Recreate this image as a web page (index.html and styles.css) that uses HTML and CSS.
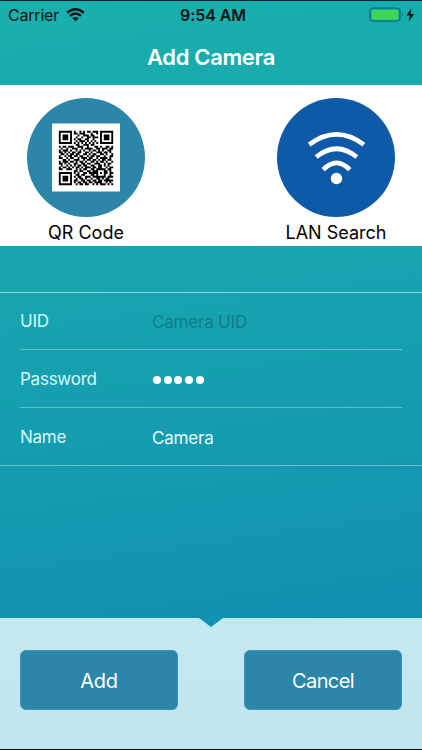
FILE: index.html
```html
<!DOCTYPE html>
<html lang="en">
<head>
    <meta charset="UTF-8">
    <meta name="viewport" content="width=device-width, initial-scale=1.0">
    <title>Add Camera</title>
    <link rel="stylesheet" href="styles.css">
</head>
<body>
    <!-- Status Bar -->
    <div class="status-bar">
        <div class="carrier">
            <span>Carrier</span>
            <svg width="19" height="14" viewBox="0 0 19 14">
                <path d="M1.2 4.8 Q9.5 -2.2 17.8 4.8" fill="none" stroke="#061416" stroke-width="2.5"/>
                <path d="M4.1 7.9 Q9.5 3.3 14.9 7.9" fill="none" stroke="#061416" stroke-width="2.4"/>
                <path d="M6.3 10.2 Q9.5 7.6 12.7 10.2 L9.5 13.2 Z" fill="#061416"/>
            </svg>
        </div>
        <div class="clock">9:54 AM</div>
        <div class="battery">
            <svg width="48" height="16" viewBox="0 0 48 16">
                <rect x="1" y="1.2" width="30" height="13" rx="3" fill="none" stroke="#0b7078" stroke-width="1.2"/>
                <rect x="2.9" y="2.9" width="26.2" height="9.6" rx="1.2" fill="#43d551"/>
                <path d="M33 5.6 Q35 7.7 33 9.8 Z" fill="#0b7078"/>
                <path d="M42.4 1.3 L37.5 8.5 L40.8 8.5 L39.6 14.6 L45.2 6.9 L41.7 6.9 Z" fill="#061416"/>
            </svg>
        </div>
    </div>

    <h1 class="title">Add Camera</h1>

    <!-- Search Options -->
    <div class="options">
        <div class="option">
            <div class="circle qr">
                <svg id="qr-code" width="68" height="69" viewBox="-3.65 -3.9 36.3 36.3">
                    <rect x="-3.65" y="-3.9" width="36.3" height="36.3" fill="white"/>
                </svg>
            </div>
            <span class="option-label">QR Code</span>
        </div>
        <div class="option">
            <div class="circle lan">
                <svg width="118" height="118" viewBox="0 0 118 118">
                    <g fill="none" stroke="white" stroke-width="4.7">
                        <path d="M32.2 45.6 Q59.5 25.2 86.8 45.6"/>
                        <path d="M39.2 58 Q59.5 41.4 79.8 58"/>
                        <path d="M46.2 70.6 Q59.5 57 72.8 70.6"/>
                    </g>
                    <circle cx="59.5" cy="79.5" r="5.7" fill="white"/>
                </svg>
            </div>
            <span class="option-label">LAN Search</span>
        </div>
    </div>

    <!-- Camera Details -->
    <div class="form">
        <div class="row">
            <label class="row-label" for="uid">UID</label>
            <input class="row-input" id="uid" type="text" placeholder="Camera UID">
        </div>
        <div class="row">
            <label class="row-label" for="password">Password</label>
            <div class="dots" id="password"><i></i><i></i><i></i><i></i><i></i></div>
        </div>
        <div class="row">
            <label class="row-label" for="name">Name</label>
            <input class="row-input" id="name" type="text" value="Camera">
        </div>
    </div>

    <!-- Bottom Buttons -->
    <div class="footer">
        <button class="button">Add</button>
        <button class="button">Cancel</button>
    </div>

    <script>
        // One string per row of the code, 1 is a dark module
        const qrRows = [
            '11111110100101011011101111111',
            '10000010110111000100101000001',
            '10111010001001110110001011101',
            '10111010010010011011101011101',
            '10111010101100110010001011101',
            '10000010010111010101001000001',
            '11111110101010101010101111111',
            '00000000011001110110000000000',
            '10110111001110010001101001101',
            '01001001110010111100110111011',
            '10111010010101001011010100110',
            '11010101101100110100111011010',
            '01101011011001101011001101001',
            '10010110110110010110110010011',
            '11001011001011101100101111010',
            '00110100111001011011010110110',
            '10111011010110100110101101001',
            '11010100110011011001110010110',
            '01001010101101100110011010100',
            '10110101011010111011011001011',
            '11001110010101100110111110110',
            '00000000110110011011100011010',
            '11111110101001101111101011011',
            '10000010011011000110100010010',
            '10111010101100111011111110111',
            '10111010010110100100110101100',
            '10111010110011011011011011111',
            '10000010101101101101111001010',
            '11111110010110110010101110101'
        ];

        let path = '';
        qrRows.forEach((row, y) => {
            row.split('').forEach((cell, x) => {
                if (cell === '1') {
                    path += `M${x} ${y}h1v1h-1z`;
                }
            });
        });
        const modules = document.createElementNS('http://www.w3.org/2000/svg', 'path');
        modules.setAttribute('d', path);
        document.getElementById('qr-code').appendChild(modules);
    </script>
</body>
</html>
```
FILE: styles.css
```css
/* Page */
* {
    box-sizing: border-box;
}
body {
    margin: 0;
    width: 422px;
    height: 750px;
    overflow: hidden;
    display: flex;
    flex-direction: column;
    font-family: Inter, "Liberation Sans", sans-serif;
    color: white;
    background: linear-gradient(172deg, #1aafad 0%, #18a6ae 32%, #169fb0 50%, #1290b0 82%, #118cb0 100%);
    border-top: 1px solid #0a2b30;
    border-bottom: 1px solid #06141a;
}
/* Status Bar */
.status-bar {
    height: 28px;
    padding: 0 5px 0 8px;
    display: grid;
    grid-template-columns: 1fr auto 1fr;
    align-items: center;
    color: #061416;
    font-size: 16px;
}
.carrier {
    display: flex;
    align-items: center;
    gap: 7px;
    letter-spacing: -0.2px;
}
.carrier svg {
    margin-top: -1px;
}
.clock {
    padding-left: 1px;
    font-weight: 600;
    letter-spacing: -0.1px;
}
.battery {
    display: flex;
    justify-content: flex-end;
}
.title {
    margin: 0;
    height: 56px;
    line-height: 56px;
    text-align: center;
    font-size: 22px;
    font-weight: 600;
    letter-spacing: -0.35px;
}
/* Search Options */
.options {
    height: 161px;
    padding: 13px 27px 0;
    display: flex;
    justify-content: space-between;
    background-color: white;
}
.option {
    display: flex;
    flex-direction: column;
    align-items: center;
}
.circle {
    width: 118px;
    height: 119px;
    border-radius: 50%;
    display: flex;
    justify-content: center;
    align-items: center;
}
.qr {
    padding-right: 1px;
    background-color: #2c86a9;
}
.lan {
    background-color: #0e5aa8;
}
.option-label {
    margin-top: 4px;
    line-height: 24px;
    font-size: 18px;
    color: black;
}
/* Form */
.form {
    margin-top: 46px;
    height: 174px;
    border-top: 1px solid #8ad5d9;
    border-bottom: 1px solid #67bfd0;
}
.row {
    height: 58px;
    margin: 0 20px;
    display: flex;
    border-bottom: 1px solid #5fbfca;
}
.row:first-child {
    height: 57px;
}
.row:last-child {
    height: 57px;
    border-bottom: none;
}
.row-label {
    width: 132px;
    line-height: 59px;
    font-size: 17px;
    letter-spacing: -0.25px;
    color: #dcf8fa;
}
.row:first-child .row-label {
    line-height: 57px;
}
.row-input {
    width: 230px;
    height: 60px;
    padding: 0;
    border: none;
    background: none;
    font-family: inherit;
    font-size: 17px;
    letter-spacing: -0.2px;
    color: #ecfbfc;
    outline: none;
}
.row:first-child .row-input {
    height: 58px;
}
.row-input::placeholder {
    color: #0c7e8c;
}
.dots {
    display: flex;
    align-items: center;
    gap: 2.7px;
    padding: 2px 0 0 1px;
}
.dots i {
    width: 8px;
    height: 8px;
    border-radius: 50%;
    background-color: white;
}
/* Footer */
.footer {
    margin-top: auto;
    height: 131px;
    padding: 32px 20px 0;
    display: flex;
    justify-content: space-between;
    background: linear-gradient(#c3e9ef, #c3e5ef);
    clip-path: polygon(0 0, 199px 0, 211px 9px, 223px 0, 100% 0, 100% 100%, 0 100%);
}
.button {
    width: 158px;
    height: 60px;
    padding: 1px 0 0;
    border: 1px solid #3a93b3;
    border-radius: 6px;
    background-color: #2c86a9;
    color: white;
    font-family: inherit;
    font-size: 20px;
    letter-spacing: -0.6px;
}
.button:first-child {
    letter-spacing: -0.3px;
}
```
